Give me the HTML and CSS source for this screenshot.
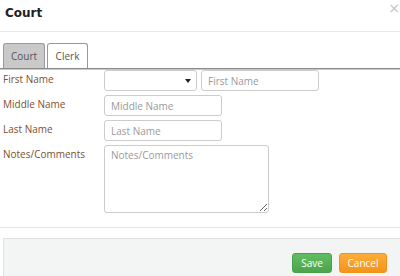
FILE: index.html
```html
<!DOCTYPE html>
<html lang="en">
<head>
  <meta charset="UTF-8" />
  <title>Court</title>
  <link rel="stylesheet" href="styles.css">
</head>
<body>
  <div class="modal">
    <div class="modal-header">
      <h3>Court</h3>
      <span class="close">&times;</span>
    </div>

    <div class="tabs">
      <div class="tab active">Court</div>
      <div class="tab">Clerk</div>
    </div>

    <div class="form">
      <label>First Name</label>
      <div class="fields">
        <div class="select"><span class="caret"></span></div>
        <input class="input wide" type="text" placeholder="First Name">
      </div>

      <label>Middle Name</label>
      <div class="fields">
        <input class="input" type="text" placeholder="Middle Name">
      </div>

      <label>Last Name</label>
      <div class="fields">
        <input class="input" type="text" placeholder="Last Name">
      </div>

      <label>Notes/Comments</label>
      <div class="fields">
        <textarea class="notes" placeholder="Notes/Comments"></textarea>
      </div>
    </div>

    <div class="modal-footer">
      <div class="footer-panel">
        <button class="btn save">Save</button>
        <button class="btn cancel">Cancel</button>
      </div>
    </div>
  </div>
</body>
</html>
```

FILE: styles.css
```css
:root {
  --label: #7e4f2f;
  --border: #cccccc;
  --placeholder: #9a9a9a;
}

* {
  box-sizing: border-box;
  margin: 0;
  padding: 0;
}

body {
  font-family: 'Open Sans', sans-serif;
  font-size: 10px;
  background: #ffffff;
  color: #333;
  overflow: hidden;
}

.modal {
  width: 400px;
  height: 276px;
  overflow: hidden;
}

.modal-header {
  height: 32px;
  border-bottom: 1px solid #eaeaea;
  display: flex;
  align-items: center;
  justify-content: space-between;
  padding: 0 0 0 5px;
}

.modal-header h3 {
  font-family: 'DejaVu Sans', sans-serif;
  font-size: 12px;
  font-weight: 700;
  color: #222;
  margin-top: -6px;
}

.close {
  font-family: 'DejaVu Sans', sans-serif;
  font-size: 14px;
  color: #c4c4c4;
  align-self: flex-start;
  line-height: 14px;
  margin-top: 1px;
}

.tabs {
  display: flex;
  gap: 2px;
  padding: 11px 0 0 3px;
  border-bottom: 1px solid #8a8a8a;
  box-shadow: 0 1px 0 #c8c8c8;
}

.tab {
  height: 25px;
  padding: 0 10px;
  border: 1px solid #999;
  border-bottom: none;
  border-radius: 3px 3px 0 0;
  display: flex;
  align-items: center;
  justify-content: center;
  color: #555;
  background: #fff;
}

.tab.active {
  width: 42px;
  background: #c9c9c9;
}

.tab + .tab {
  width: 41px;
}

.form {
  display: grid;
  grid-template-columns: 101px 1fr;
  row-gap: 4px;
  padding: 0 0 0 3px;
  margin-top: 1px;
}

.form label {
  color: var(--label);
  padding-top: 2px;
}

.fields {
  display: flex;
  gap: 4px;
}

.select {
  width: 93px;
  height: 21px;
  border: 1px solid var(--border);
  border-radius: 3px;
  position: relative;
}

.caret {
  position: absolute;
  right: 5px;
  top: 8px;
  border-left: 3px solid transparent;
  border-right: 3px solid transparent;
  border-top: 4px solid #222;
}

.input {
  width: 118px;
  height: 21px;
  border: 1px solid var(--border);
  border-radius: 3px;
  padding: 0 6px;
  font-family: inherit;
  font-size: 10px;
}

.input.wide {
  width: 118px;
}

.input::placeholder,
.notes::placeholder {
  color: var(--placeholder);
}

.notes {
  width: 165px;
  height: 68px;
  border: 1px solid var(--border);
  border-radius: 3px;
  padding: 2px 6px;
  font-family: inherit;
  font-size: 10px;
}

.modal-footer {
  margin-top: 14px;
  border-top: 1px solid #e4e4e4;
  padding: 10px 0 0 3px;
}

.footer-panel {
  height: 38px;
  background: #f3f4f4;
  border-top: 1px solid #e2e2e2;
  border-left: 1px solid #e2e2e2;
  display: flex;
  justify-content: flex-end;
  align-items: flex-start;
  gap: 7px;
  padding: 14px 13px 0 0;
}

.btn {
  height: 20px;
  border-radius: 3px;
  color: #fff;
  font-family: inherit;
  font-size: 10px;
  padding: 0 6px;
}

.save {
  width: 40px;
  background: linear-gradient(#62bd62, #4ca54c);
  border: 1px solid #4a9f4a;
}

.cancel {
  width: 48px;
  background: linear-gradient(#fbad3a, #f4931a);
  border: 1px solid #ef9419;
}
```
